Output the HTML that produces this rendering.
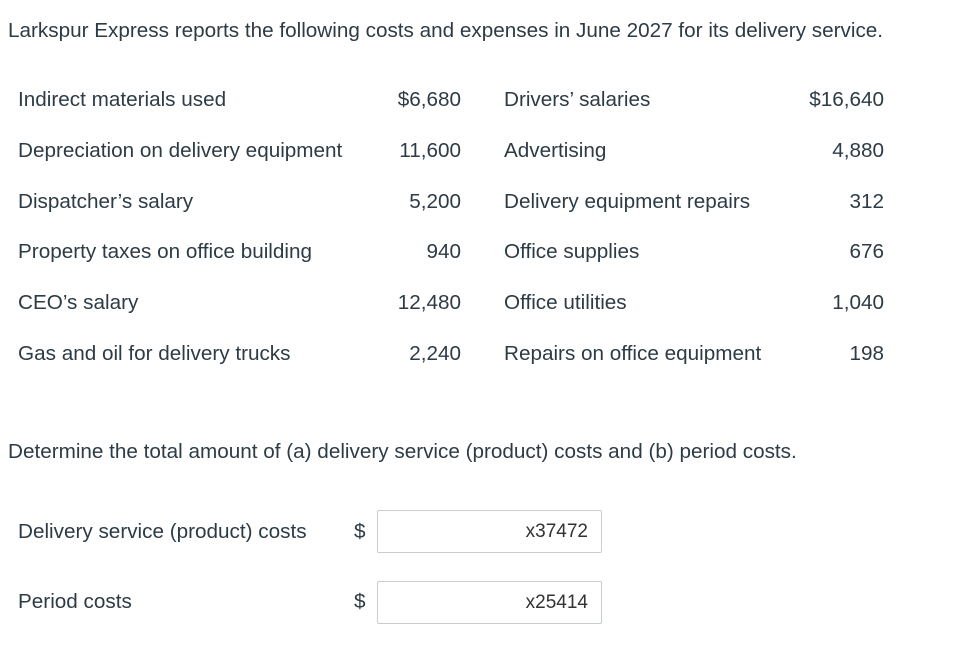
<!DOCTYPE html>
<html><head><meta charset="utf-8"><style>
body{margin:0;width:956px;height:648px;background:#fff;font-family:"Liberation Sans",sans-serif;color:#2d3b45;font-size:20.7px;position:relative;overflow:hidden}
.t{position:absolute;white-space:nowrap;line-height:24px}
.r{text-align:right}
.box{position:absolute;left:377px;width:225px;height:43px;border:1px solid #c7cdd1;border-radius:2px;background:#fff;color:#333;font-size:19px;text-align:right;box-sizing:border-box;line-height:41px;padding-right:13px}
</style></head><body>
<div class="t" style="left:8px;top:19px">Larkspur Express reports the following costs and expenses in June 2027 for its delivery service.</div>

<div class="t" style="left:18px;top:88px">Indirect materials used</div>
<div class="t r" style="right:495px;top:88px">$6,680</div>
<div class="t" style="left:504px;top:88px">Drivers’ salaries</div>
<div class="t r" style="right:72px;top:88px">$16,640</div>

<div class="t" style="left:18px;top:139px">Depreciation on delivery equipment</div>
<div class="t r" style="right:495px;top:139px">11,600</div>
<div class="t" style="left:504px;top:139px">Advertising</div>
<div class="t r" style="right:72px;top:139px">4,880</div>

<div class="t" style="left:18px;top:190px">Dispatcher’s salary</div>
<div class="t r" style="right:495px;top:190px">5,200</div>
<div class="t" style="left:504px;top:190px">Delivery equipment repairs</div>
<div class="t r" style="right:72px;top:190px">312</div>

<div class="t" style="left:18px;top:240px">Property taxes on office building</div>
<div class="t r" style="right:495px;top:240px">940</div>
<div class="t" style="left:504px;top:240px">Office supplies</div>
<div class="t r" style="right:72px;top:240px">676</div>

<div class="t" style="left:18px;top:291px">CEO’s salary</div>
<div class="t r" style="right:495px;top:291px">12,480</div>
<div class="t" style="left:504px;top:291px">Office utilities</div>
<div class="t r" style="right:72px;top:291px">1,040</div>

<div class="t" style="left:18px;top:342px">Gas and oil for delivery trucks</div>
<div class="t r" style="right:495px;top:342px">2,240</div>
<div class="t" style="left:504px;top:342px">Repairs on office equipment</div>
<div class="t r" style="right:72px;top:342px">198</div>

<div class="t" style="left:8px;top:440px">Determine the total amount of (a) delivery service (product) costs and (b) period costs.</div>

<div class="t" style="left:18px;top:520px">Delivery service (product) costs</div>
<div class="t" style="left:354px;top:520px">$</div>
<div class="box" style="top:510px">x37472</div>

<div class="t" style="left:18px;top:590px">Period costs</div>
<div class="t" style="left:354px;top:590px">$</div>
<div class="box" style="top:581px">x25414</div>
</body></html>
